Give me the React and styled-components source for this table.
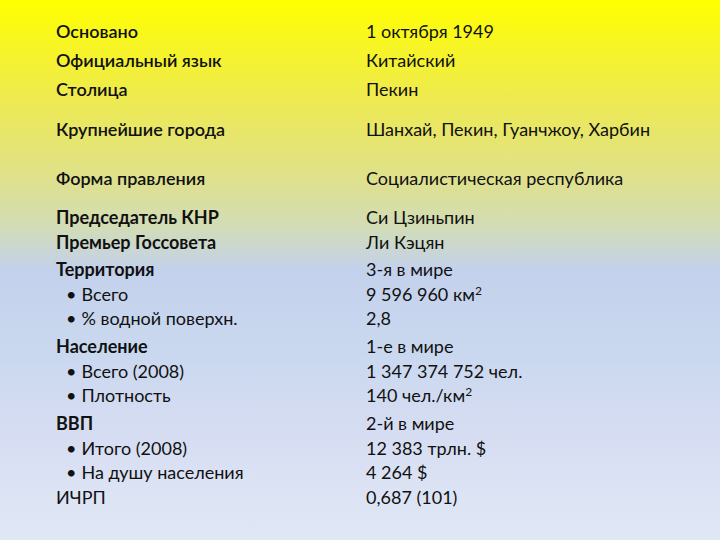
import React from "react";
import styled, { createGlobalStyle } from "styled-components";

const GlobalStyle = createGlobalStyle`
  html, body {
    margin: 0;
    padding: 0;
  }
  body {
    font-family: Lato, "Open Sans", "Noto Sans", sans-serif;
    color: #111;
  }
`;

const Slide = styled.div`
  width: 720px;
  height: 540px;
  box-sizing: border-box;
  padding: 19px 0 0 56px;
  overflow: hidden;
  background: linear-gradient(
    to bottom,
    #ffff00 0%,
    #eeea4f 18%,
    #dfe18c 33%,
    #d2dcb6 42%,
    #c3d1ec 50%,
    #cad8ef 66%,
    #d6ddf2 80%,
    #e0e8f6 100%
  );
`;

const Table = styled.div`
  display: grid;
  grid-template-columns: 310px 1fr;
`;

const Cell = styled.div`
  display: flex;
  flex-direction: column;
  font-size: 18px;
  line-height: 24.5px;
  min-height: ${(p) => p.$h}px;
`;

const Label = styled.div`
  font-weight: ${(p) => (p.$weight ? p.$weight : 400)};
`;

const Bullet = styled.div`
  padding-left: 10px;
  &::before {
    content: "•";
    margin-right: 5px;
  }
`;

const Sup = styled.sup`
  font-size: 12px;
  line-height: 0;
  vertical-align: 6px;
`;

const rows = [
  {
    h: 29,
    left: [{ t: "Основано", w: 600 }],
    right: ["1 октября 1949"],
  },
  {
    h: 29,
    left: [{ t: "Официальный язык", w: 600 }],
    right: ["Китайский"],
  },
  {
    h: 40,
    left: [{ t: "Столица", w: 600 }],
    right: ["Пекин"],
  },
  {
    h: 49,
    left: [{ t: "Крупнейшие города", w: 600 }],
    right: ["Шанхай, Пекин, Гуанчжоу, Харбин"],
  },
  {
    h: 39,
    left: [{ t: "Форма правления", w: 600 }],
    right: ["Социалистическая республика"],
  },
  {
    h: 52,
    left: [
      { t: "Председатель КНР", w: 700 },
      { t: "Премьер Госсовета", w: 700 },
    ],
    right: ["Си Цзиньпин", "Ли Кэцян"],
  },
  {
    h: 77,
    left: [
      { t: "Территория", w: 700 },
      { t: "Всего", b: true },
      { t: "% водной поверхн.", b: true },
    ],
    right: ["3-я в мире", <>9 596 960 км<Sup>2</Sup></>, "2,8"],
  },
  {
    h: 77,
    left: [
      { t: "Население", w: 700 },
      { t: "Всего (2008)", b: true },
      { t: "Плотность", b: true },
    ],
    right: ["1-е в мире", "1 347 374 752 чел.", <>140 чел./км<Sup>2</Sup></>],
  },
  {
    h: 98,
    left: [
      { t: "ВВП", w: 700 },
      { t: "Итого (2008)", b: true },
      { t: "На душу населения", b: true },
      { t: "ИЧРП" },
    ],
    right: ["2-й в мире", "12 383 трлн. $", "4 264 $", "0,687 (101)"],
  },
];

export default function App() {
  return (
    <>
      <GlobalStyle />
      <Slide>
        <Table>
          {rows.map((row, i) => (
            <React.Fragment key={i}>
              <Cell $h={row.h}>
                {row.left.map((item, j) =>
                  item.b ? (
                    <Bullet key={j}>{item.t}</Bullet>
                  ) : (
                    <Label key={j} $weight={item.w}>
                      {item.t}
                    </Label>
                  )
                )}
              </Cell>
              <Cell $h={row.h}>
                {row.right.map((v, j) => (
                  <div key={j}>{v}</div>
                ))}
              </Cell>
            </React.Fragment>
          ))}
        </Table>
      </Slide>
    </>
  );
}
